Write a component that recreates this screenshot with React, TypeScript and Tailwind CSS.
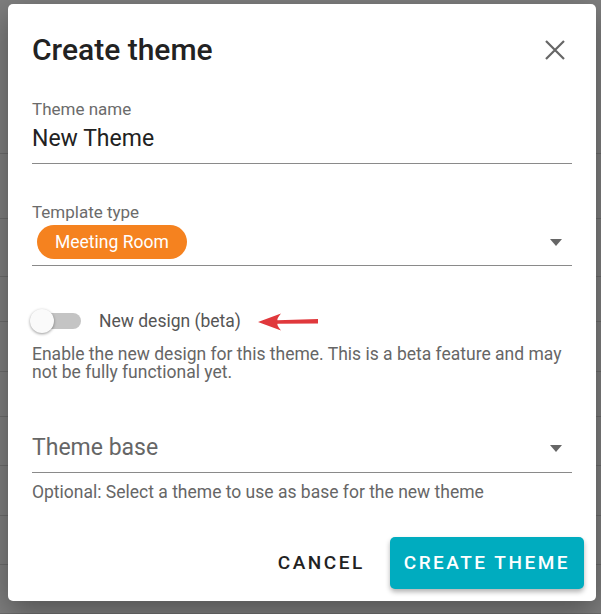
const rows = [154, 65, 58, 45, 50, 45, 49, 50, 49, 49];

function Caret() {
  return (
    <svg width="12" height="7" viewBox="0 0 12 7" className="mr-[10px] shrink-0">
      <path d="M0 0h12L6 7z" fill="#666" />
    </svg>
  );
}

export default function App() {
  return (
    <div
      className="relative h-[614px] w-[601px] overflow-hidden bg-[#7e7e7e]"
      style={{ fontFamily: "Roboto, 'Liberation Sans', sans-serif" }}
    >
      {/* page behind the overlay */}
      <div className="flex flex-col">
        {rows.map((h, i) => (
          <div key={i} className="border-b border-[#6c6c6c]" style={{ height: h }} />
        ))}
      </div>

      <div className="absolute left-[8px] top-[4px] flex h-[597px] w-[588px] flex-col rounded-[5px] bg-white px-[24px] shadow-[0_10px_30px_rgba(0,0,0,0.35)]">
        <div className="mt-[28px] flex h-[36px] items-center justify-between">
          <h2 className="text-[30px] font-medium leading-[36px] text-[#222]">Create theme</h2>
          <svg width="20" height="20" viewBox="0 0 20 20" className="mr-[7px]">
            <path d="M1 1l18 18M19 1L1 19" stroke="#666" strokeWidth="2.2" />
          </svg>
        </div>

        <div className="mt-[31px] text-[17px] leading-[20px] text-[#6b6b6b]">Theme name</div>
        <div className="mt-[5px] border-b border-[#8a8a8a] pb-[9px] text-[23px] leading-[30px] text-[#222]">
          New Theme
        </div>

        <div className="mt-[38px] text-[17px] leading-[20px] text-[#6b6b6b]">Template type</div>
        <div className="mt-[3px] flex items-center justify-between border-b border-[#8a8a8a] pb-[6px]">
          <span className="ml-[5px] flex h-[34px] items-center rounded-full bg-[#f5821f] px-[18px] text-[17.5px] text-white">
            Meeting Room
          </span>
          <Caret />
        </div>

        <div className="mt-[43px] flex h-[24px] items-center">
          <div className="relative -ml-[2px] h-[24px] w-[52px]">
            <div className="absolute left-[5px] top-[4px] h-[16px] w-[46px] rounded-full bg-[#c4c4c4]" />
            <div className="absolute left-0 top-0 h-[24px] w-[24px] rounded-full bg-[#fafafa] shadow-[0_1px_3px_rgba(0,0,0,0.4)]" />
          </div>
          <span className="ml-[17px] text-[17.5px] text-[#555]">New design (beta)</span>
          <svg width="62" height="18" viewBox="0 0 62 18" className="ml-[17px] mt-[1px]">
            <path d="M0 9L23 0.5Q18.5 6 19.5 7.2L60 6L60 10.5L19.5 10.8Q18.5 12 23 17.5Z" fill="#e0383c" />
          </svg>
        </div>
        <p className="mt-[12px] text-[17.5px] leading-[18px] text-[#666]">
          Enable the new design for this theme. This is a beta feature and may not be fully functional yet.
        </p>

        <div className="mt-[52px] flex items-center justify-between border-b border-[#8a8a8a] pb-[9px]">
          <span className="text-[23px] leading-[30px] text-[#666]">Theme base</span>
          <Caret />
        </div>
        <div className="mt-[9px] text-[17.5px] leading-[20px] text-[#666]">
          Optional: Select a theme to use as base for the new theme
        </div>

        <div className="-mr-[12px] mt-[35px] flex items-center justify-end gap-[11px]">
          <button className="h-[52px] px-[14px] text-[19px] font-medium tracking-[2.5px] text-[#222]">CANCEL</button>
          <button className="h-[52px] rounded-[5px] bg-[#00acbf] px-[14px] text-[19px] font-medium tracking-[2.5px] text-white shadow-[0_3px_5px_rgba(0,0,0,0.3)]">
            CREATE THEME
          </button>
        </div>
      </div>
    </div>
  );
}
